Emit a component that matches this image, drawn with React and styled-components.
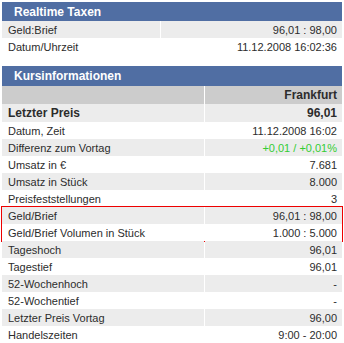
import React from "react";
import styled, { createGlobalStyle } from "styled-components";

const Global = createGlobalStyle`
  html, body { margin: 0; padding: 0; background: #fff; }
  body { font-family: "Liberation Sans", Arial, sans-serif; font-size: 11px; color: #2c2c2c; }
`;

const Page = styled.div`
  width: 340px;
  padding: 2px 0 0 2px;
  display: flex;
  flex-direction: column;
  gap: 11px;
`;

const Section = styled.div`
  display: flex;
  flex-direction: column;
`;

const Header = styled.div`
  height: ${(p) => p.$h || 19}px;
  background: #506ea3;
  color: #fff;
  font-weight: bold;
  font-size: 12px;
  display: flex;
  align-items: center;
  padding-left: 12px;
`;

const Row = styled.div`
  display: grid;
  grid-template-columns: ${(p) => p.$cols};
  column-gap: 1px;
  height: ${(p) => p.$h || 17}px;
  font-weight: ${(p) => (p.$bold ? "bold" : "normal")};
  font-size: ${(p) => (p.$bold ? 12 : 11)}px;
`;

const Cell = styled.div`
  background: ${(p) => p.$bg};
  display: flex;
  align-items: center;
  justify-content: ${(p) => (p.$right ? "flex-end" : "flex-start")};
  padding: ${(p) => (p.$right ? "0 5px 0 0" : "0 0 0 6px")};
  color: ${(p) => p.$color || "inherit"};
  white-space: nowrap;
`;

const Highlight = styled.div`
  margin: -1px -1px;
  border: 1px solid #ee0000;
  display: flex;
  flex-direction: column;
`;

const GRAY = "#ececec";
const DARK = "#cccccc";
const WHITE = "#ffffff";

const rtCols = "158px 1fr";
const kCols = "202px 1fr";

function KRow({ label, value, bg, color, bold, h }) {
  return (
    <Row $cols={kCols} $bold={bold} $h={h}>
      <Cell $bg={bg}>{label}</Cell>
      <Cell $bg={bg} $right $color={color}>{value}</Cell>
    </Row>
  );
}

const rowsA = [
  ["Datum, Zeit", "11.12.2008 16:02"],
  ["Differenz zum Vortag", "+0,01 / +0,01%", "#33cc33"],
  ["Umsatz in €", "7.681"],
  ["Umsatz in Stück", "8.000"],
  ["Preisfeststellungen", "3"],
];
const rowsB = [
  ["Tageshoch", "96,01"],
  ["Tagestief", "96,01"],
  ["52-Wochenhoch", "-"],
  ["52-Wochentief", "-"],
  ["Letzter Preis Vortag", "96,00"],
  ["Handelszeiten", "9:00 - 20:00"],
];

export default function App() {
  return (
    <>
      <Global />
      <Page>
        <Section>
          <Header>Realtime Taxen</Header>
          <Row $cols={rtCols}>
            <Cell $bg={GRAY}>Geld:Brief</Cell>
            <Cell $bg={GRAY} $right>96,01 : 98,00</Cell>
          </Row>
          <Row $cols={rtCols}>
            <Cell $bg={WHITE}>Datum/Uhrzeit</Cell>
            <Cell $bg={WHITE} $right>11.12.2008 16:02:36</Cell>
          </Row>
        </Section>
        <Section>
          <Header $h={20}>Kursinformationen</Header>
          <KRow label="" value="Frankfurt" bg={DARK} bold h={18} />
          <KRow label="Letzter Preis" value="96,01" bg={GRAY} bold h={18} />
          {rowsA.map(([l, v, c], i) => (
            <KRow key={l} label={l} value={v} color={c} bg={i % 2 === 0 ? WHITE : GRAY} />
          ))}
          <Highlight>
            <KRow label="Geld/Brief" value="96,01 : 98,00" bg={GRAY} />
            <KRow label="Geld/Brief Volumen in Stück" value="1.000 : 5.000" bg={WHITE} />
          </Highlight>
          {rowsB.map(([l, v], i) => (
            <KRow key={l} label={l} value={v} bg={i % 2 === 0 ? GRAY : WHITE} />
          ))}
        </Section>
      </Page>
    </>
  );
}
